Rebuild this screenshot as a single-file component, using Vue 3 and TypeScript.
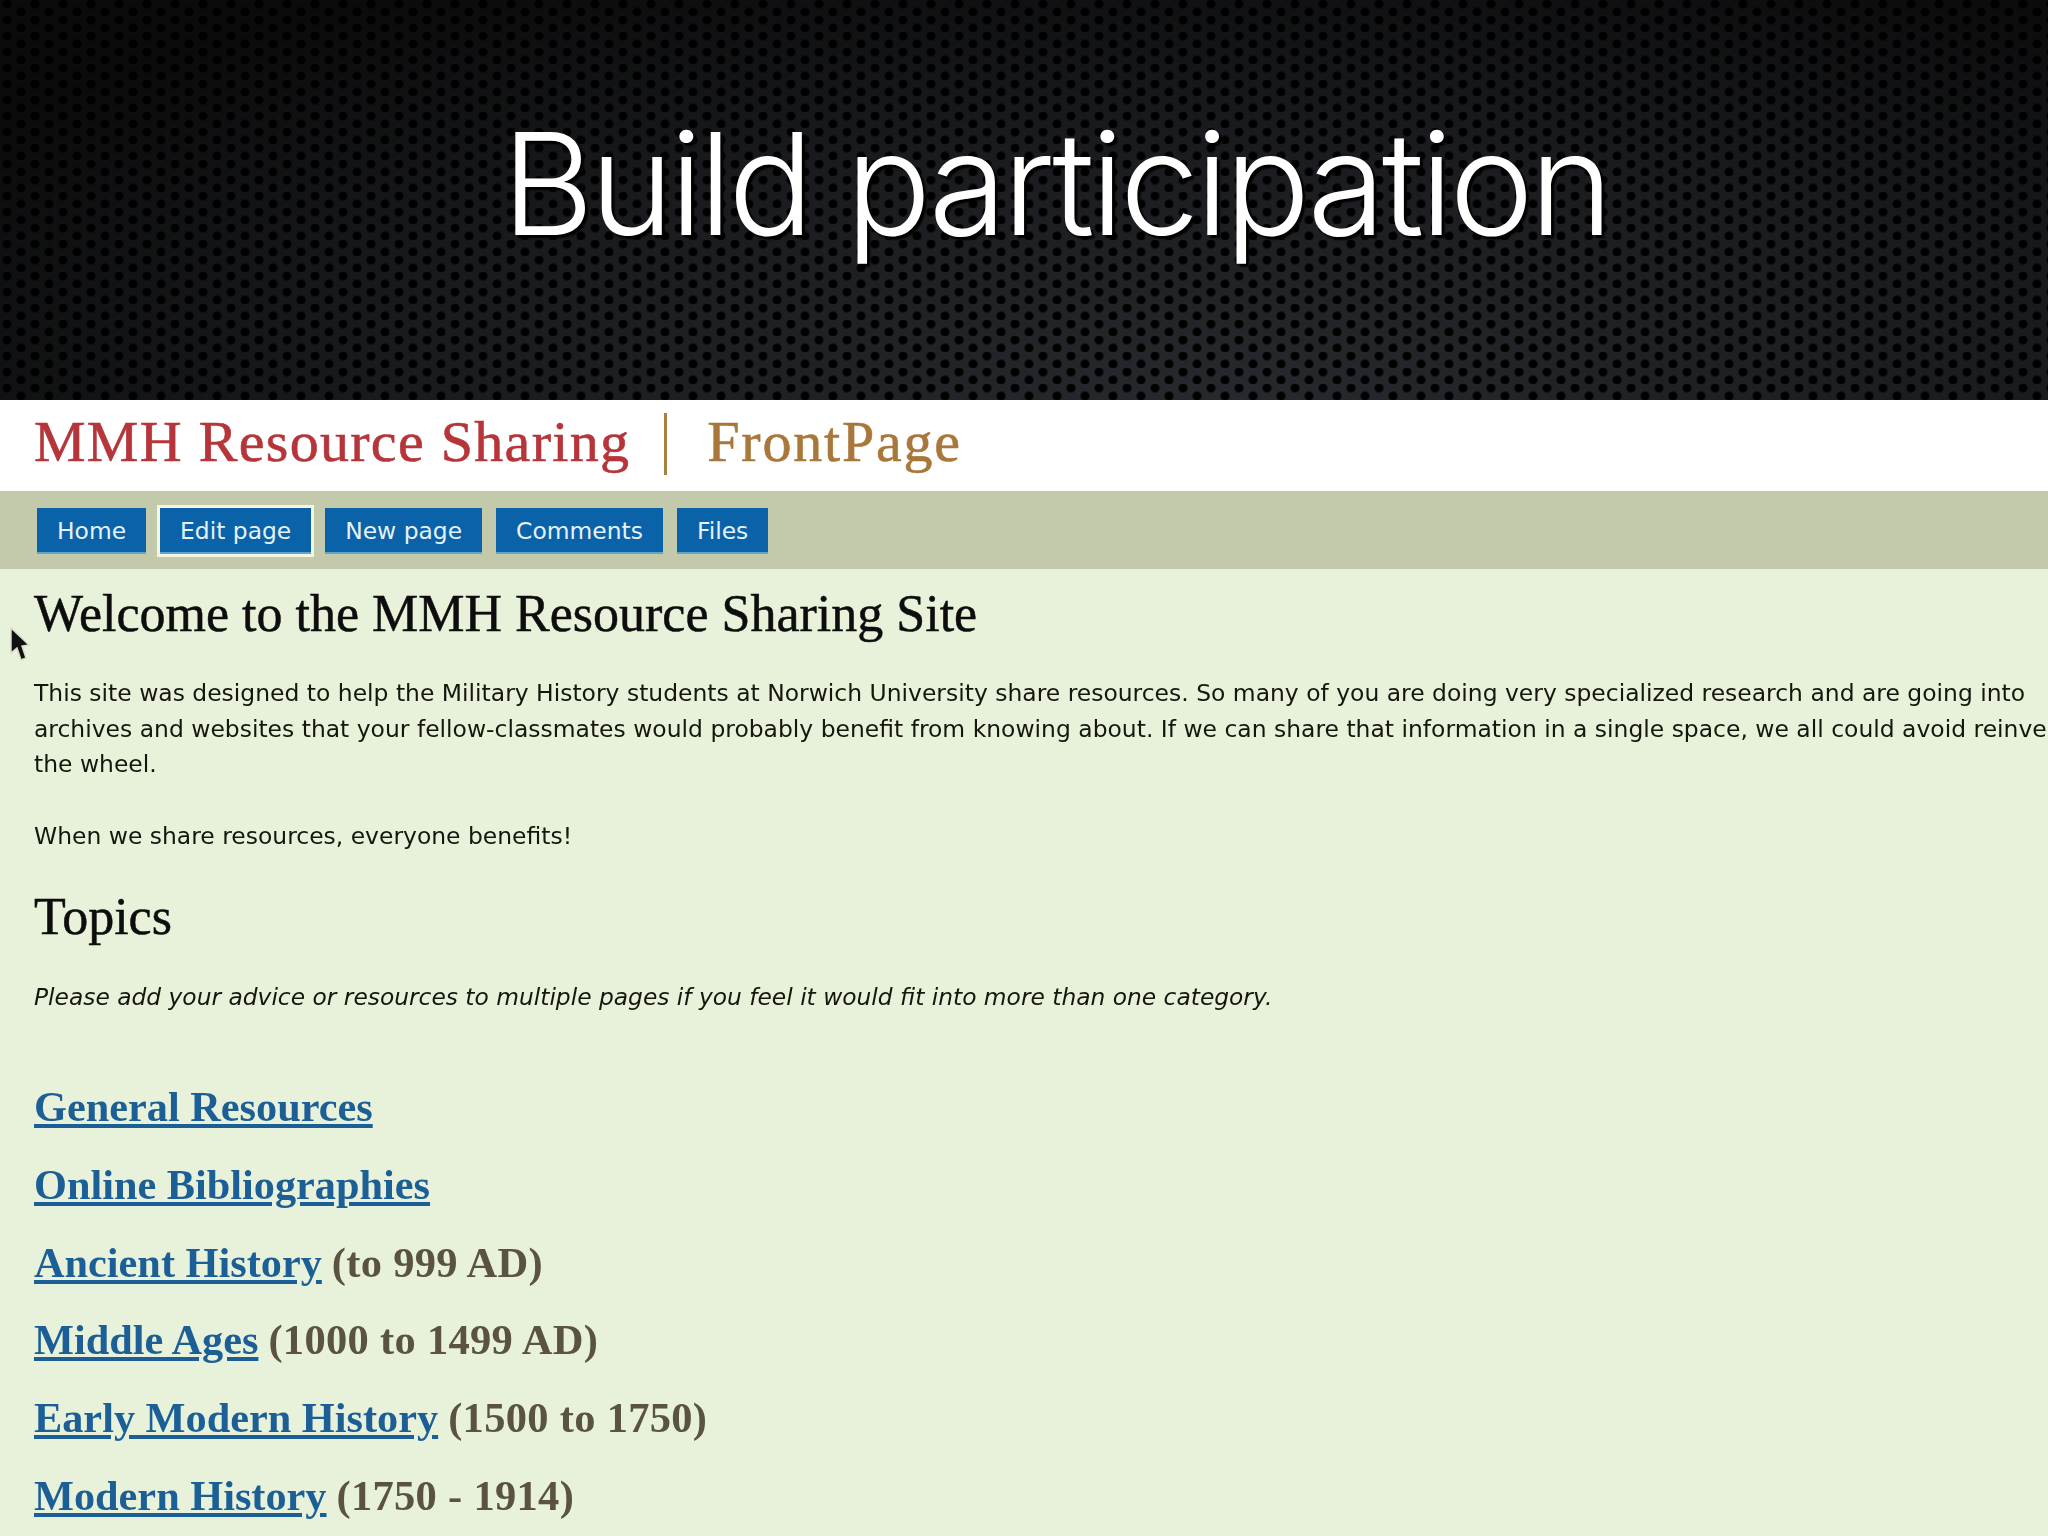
<script setup lang="ts">
const tabs = [
  { label: 'Home', active: false },
  { label: 'Edit page', active: true },
  { label: 'New page', active: false },
  { label: 'Comments', active: false },
  { label: 'Files', active: false },
]
const topics = [
  { name: 'General Resources', range: '' },
  { name: 'Online Bibliographies', range: '' },
  { name: 'Ancient History', range: '(to 999 AD)' },
  { name: 'Middle Ages', range: '(1000 to 1499 AD)' },
  { name: 'Early Modern History', range: '(1500 to 1750)' },
  { name: 'Modern History', range: '(1750 - 1914)' },
]
</script>

<template>
  <div class="slide">
    <header class="hero">
      <h1>Build participation</h1>
    </header>
    <div class="masthead">
      <span class="site">MMH Resource Sharing</span>
      <span class="rule"></span>
      <span class="page">FrontPage</span>
    </div>
    <nav class="tabs">
      <a v-for="t in tabs" :key="t.label" class="tab" :class="{ active: t.active }">{{ t.label }}</a>
    </nav>
    <main class="content">
      <svg class="cursor" width="22" height="38" viewBox="0 0 22 38">
        <path d="M2 1 L2 26 L8 21 L12 33 L17 31 L13 19 L20 18 Z" fill="#111" stroke="#d8dcc8" stroke-width="1.5" />
      </svg>
      <h2 class="welcome">Welcome to the MMH Resource Sharing Site</h2>
      <p class="para">This site was designed to help the Military History students at Norwich University share resources. So many of you are doing very specialized research and are going into<br />archives and websites that your fellow-classmates would probably benefit from knowing about. If we can share that information in a single space, we all could avoid reinventing<br />the wheel.</p>
      <p class="para second">When we share resources, everyone benefits!</p>
      <h2 class="topics-title">Topics</h2>
      <p class="para note">Please add your advice or resources to multiple pages if you feel it would fit into more than one category.</p>
      <ul class="topics">
        <li v-for="t in topics" :key="t.name"><a>{{ t.name }}</a><span v-if="t.range" class="range">{{ t.range }}</span></li>
      </ul>
    </main>
  </div>
</template>

<style>
html, body { margin: 0; background: #e8f1d9; }
</style>

<style scoped>
.slide { width: 2048px; height: 1536px; overflow: hidden; display: flex; flex-direction: column; background: #e8f1d9; }
.hero {
  height: 400px; flex: none; box-sizing: border-box; padding: 103px 0 0 63px; text-align: center;
  background-color: #0b0b0c;
  background-image:
    radial-gradient(circle at 7px 4px, #000 0 3.4px, rgba(0,0,0,0) 5.4px),
    radial-gradient(circle at 21px 12px, #000 0 3.4px, rgba(0,0,0,0) 5.4px),
    radial-gradient(ellipse 1500px 480px at 60% 100%, #26292d, #191b1e 55%, #0b0b0c 100%);
  background-size: 28px 16px, 28px 16px, 100% 100%;
}
h1 {
  margin: 0; font: 300 142px/160px Inter, Roboto, "Liberation Sans", sans-serif; color: #fff;
  text-shadow: 3px 3px 2px #000; letter-spacing: -3.9px;
}
.masthead { height: 91px; flex: none; background: #fff; display: flex; align-items: center; padding: 0 0 8px 34px; box-sizing: border-box; font-family: "Liberation Serif", serif; font-size: 58px; letter-spacing: 1.3px; -webkit-text-stroke: 0.6px currentColor; }
.masthead > * { filter: blur(0.4px); }
.site { color: #b5353a; }
.rule { width: 3px; height: 62px; background: #a8803f; margin: 4px 40px 0 34px; }
.page { color: #a9773a; letter-spacing: 1.8px; }
.tabs { height: 78px; flex: none; box-sizing: border-box; background: #c3c9ab; display: flex; align-items: center; padding: 2px 0 0 37px; gap: 14px; }
.tab { background: #0a62a8; color: #e6f2fa; font: 23.4px "DejaVu Sans", sans-serif; padding: 0 20px; height: 46px; line-height: 46px; border-bottom: 2px solid #5fa6c8; box-sizing: border-box; }
.tab.active { outline: 3px solid #f4f6e0; }
.content { position: relative; padding: 16px 0 0 34px; color: #111; filter: blur(0.4px); }
.cursor { position: absolute; left: 9px; top: 58px; }
.welcome { margin: 0; font: 400 52px/58px "Liberation Serif", serif; color: #0d0d0d; -webkit-text-stroke: 0.5px currentColor; }
.para { margin: 33px 0 0; font: 23.45px/35.6px "DejaVu Sans", sans-serif; white-space: nowrap; color: #15170f; }
.para.second { margin-top: 36px; }
.topics-title { margin: 33px 0 0; font: 400 52px/60px "Liberation Serif", serif; color: #0d0d0d; -webkit-text-stroke: 0.5px currentColor; }
.note { font-style: italic; font-size: 23.35px; margin-top: 33px; }
.topics { list-style: none; margin: 66px 0 0; padding: 0; font: 700 42.3px/50px "Liberation Serif", serif; }
.topics li { margin-bottom: 27.8px; }
.topics a { color: #1b5f96; text-decoration: underline; }
.range { color: #5a5342; margin-left: 10px; font-size: 42.5px; letter-spacing: 0.3px; }
</style>
